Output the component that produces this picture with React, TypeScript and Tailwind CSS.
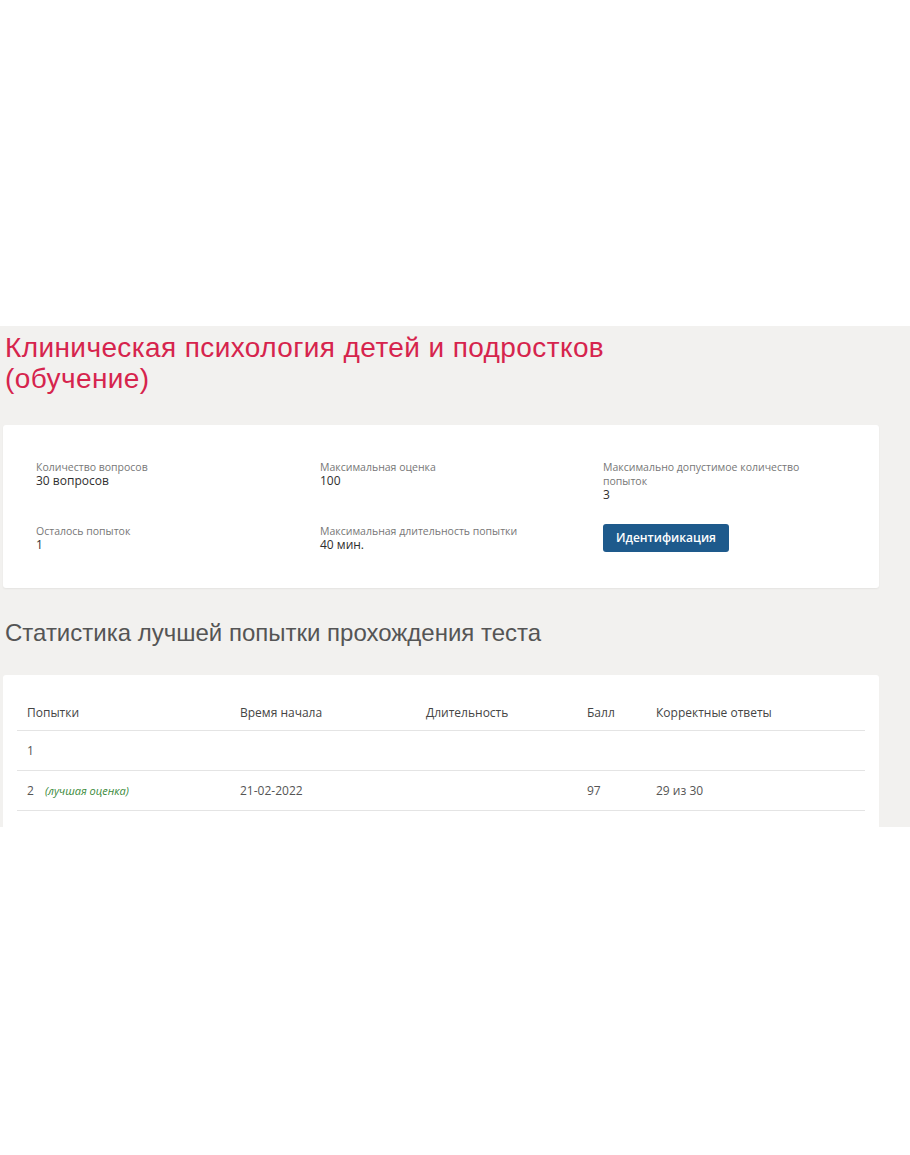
import React from 'react';

const info = [
    { label: 'Количество вопросов', value: '30 вопросов' },
    { label: 'Максимальная оценка', value: '100' },
    { label: 'Максимально допустимое количество попыток', value: '3' },
    { label: 'Осталось попыток', value: '1' },
    { label: 'Максимальная длительность попытки', value: '40 мин.' },
];

const rows = [
    { n: '1', best: false, start: '', dur: '', score: '', correct: '' },
    { n: '2', best: true, start: '21-02-2022', dur: '', score: '97', correct: '29 из 30' },
];

function InfoItem({ label, value }: { label: string; value: string }) {
    return (
        <div className="w-[200px]">
            <div className="text-[10.5px] leading-[14px] text-[#777]">{label}</div>
            <div className="text-[12px] leading-[14px] text-[#2f2f2f]">{value}</div>
        </div>
    );
}

export default function App() {
    return (
        <div className="bg-white min-h-[1155px] font-['Open_Sans',sans-serif]">
            <div className="h-[326px]" />

            {/* серая полоса с контентом */}
            <div className="bg-[#f2f1ef] h-[501px] overflow-hidden pl-[3px]">
                <h1 className="pt-[6px] pl-[2px] text-[28px] leading-[31px] tracking-[0.4px] text-[#d6244d] font-['Liberation_Sans',sans-serif]">
                    Клиническая психология детей и подростков
                    <br />
                    (обучение)
                </h1>

                <div className="mt-[31px] w-[876px] h-[163px] bg-white rounded-[3px] shadow-[0_1px_2px_rgba(0,0,0,0.06)] pl-[33px] pt-[35px]">
                    <div className="grid grid-cols-[284px_283px_1fr] gap-y-[22px]">
                        <InfoItem {...info[0]} />
                        <InfoItem {...info[1]} />
                        <InfoItem {...info[2]} />
                        <InfoItem {...info[3]} />
                        <InfoItem {...info[4]} />
                        <div>
                            <button className="h-[28px] px-[13px] bg-[#1e5a8c] rounded-[3px] text-white text-[12px] font-semibold">
                                Идентификация
                            </button>
                        </div>
                    </div>
                </div>

                <h2 className="mt-[31px] pl-[2px] text-[24px] leading-[28px] text-[#555] font-['Liberation_Sans',sans-serif]">
                    Статистика лучшей попытки прохождения теста
                </h2>

                <div className="mt-[28px] w-[876px] bg-white rounded-[3px] px-[14px] pt-[20px] pb-[20px]">
                    <div className="grid grid-cols-[213px_186px_161px_69px_1fr] text-[12px] text-[#444] pl-[10px] h-[36px] items-center border-b border-[#e4e4e4]">
                        <div>Попытки</div>
                        <div>Время начала</div>
                        <div>Длительность</div>
                        <div>Балл</div>
                        <div>Корректные ответы</div>
                    </div>
                    {rows.map((r) => (
                        <div
                            key={r.n}
                            className="grid grid-cols-[213px_186px_161px_69px_1fr] text-[12px] text-[#555] pl-[10px] h-[40px] items-center border-b border-[#e4e4e4]"
                        >
                            <div>
                                {r.n}
                                {r.best && <span className="ml-[11px] italic text-[11px] text-[#3a8a3a]">(лучшая оценка)</span>}
                            </div>
                            <div>{r.start}</div>
                            <div>{r.dur}</div>
                            <div>{r.score}</div>
                            <div>{r.correct}</div>
                        </div>
                    ))}
                </div>
            </div>
        </div>
    );
}
